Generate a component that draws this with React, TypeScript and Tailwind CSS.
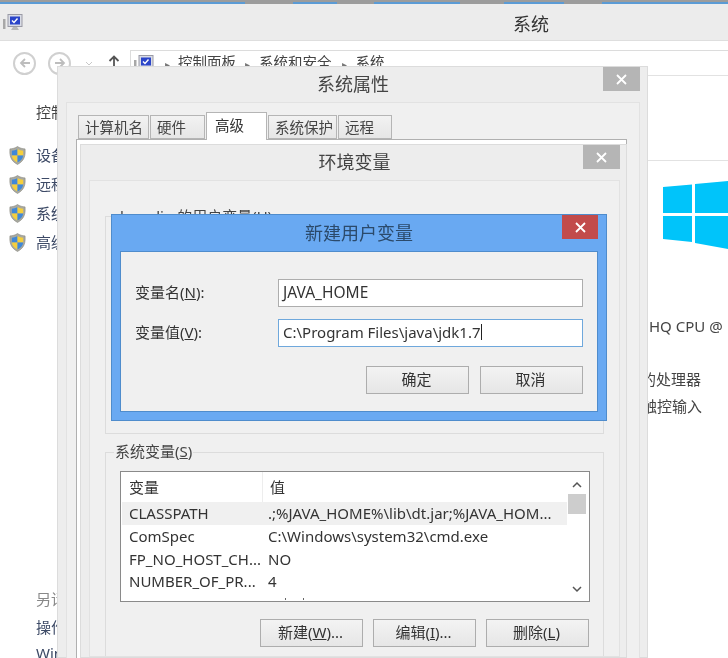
const cjk = "font-['Noto_Sans','Noto_Sans_CJK_SC',sans-serif]";

function Shield() {
  return (
    <svg width="17" height="19" viewBox="0 0 18 20" className="shrink-0">
      <path d="M9 .5C6.500 2.200 4 2.800 1 3c-.5 7 .5 12.500 8 16.500C16.500 15.500 17.500 10 17 3c-3-.2-5.500-.8-8-2.500z" fill="#a9a9a0" stroke="#85857c" strokeWidth=".6" />
      <path d="M9 3C7 4.200 5.200 4.700 3 4.900V10h6z" fill="#3f88d8" />
      <path d="M9 3c2 1.200 3.800 1.700 6 1.900V10H9z" fill="#f5cf3c" />
      <path d="M3 10c.3 3 1.800 5 6 7.500V10z" fill="#f5cf3c" />
      <path d="M15 10c-.3 3-1.800 5-6 7.500V10z" fill="#3f88d8" />
    </svg>
  );
}

function Computer({ className }: { className?: string }) {
  return (
    <svg width="20" height="17" viewBox="0 0 20 17" className={className}>
      <rect x="0" y="5" width="2.500" height="10" fill="#a8a8a8" />
      <rect x="5" y="0.500" width="14" height="12" fill="#d9dce6" stroke="#9a9aa5" />
      <rect x="7" y="2.500" width="10" height="8" fill="#2b45c9" />
      <path d="M9 6.500l2 2 3.500-4" fill="none" stroke="#fff" strokeWidth="1.400" />
      <path d="M8 16l2-3h4l2 3z" fill="#b8b8b8" />
    </svg>
  );
}

function CloseX({ color }: { color: string }) {
  return (
    <svg width="11" height="11" viewBox="0 0 11 11">
      <path d="M1 1l9 9M10 1l-9 9" stroke={color} strokeWidth="1.800" />
    </svg>
  );
}

function Btn({ children }: { children: React.ReactNode }) {
  return (
    <div className="flex h-[28px] w-[103px] items-center justify-center border border-[#adadad] bg-gradient-to-b from-[#f3f3f3] to-[#e6e6e6] pb-[2px] pr-[2px] text-[15px] leading-[20px] text-[#333]">
      {children}
    </div>
  );
}

function SideRow({ label }: { label: string }) {
  return (
    <div className="flex h-[29px] items-center gap-[10px] whitespace-nowrap pl-[9px] text-[15px] leading-[20px] text-[#3d4a66]">
      <Shield />
      <span className="-mt-[2px]">{label}</span>
    </div>
  );
}

function Tab({ label, w, active }: { label: string; w: string; active?: boolean }) {
  return active ? (
    <div className={`-mb-px flex h-[28px] items-start border border-b-0 border-[#b5b5b5] bg-white pl-[8px] pt-[2px] text-[14.500px] leading-[20px] text-[#333] ${w}`}>{label}</div>
  ) : (
    <div className={`flex h-[24px] items-center border border-[#b5b5b5] bg-gradient-to-b from-[#f2f2f2] to-[#e6e6e6] pl-[6px] text-[14.500px] leading-[20px] text-[#444] ${w}`}>{label}</div>
  );
}

const rows = [
  ["CLASSPATH", ".;%JAVA_HOME%\\lib\\dt.jar;%JAVA_HOM..."],
  ["ComSpec", "C:\\Windows\\system32\\cmd.exe"],
  ["FP_NO_HOST_CH...", "NO"],
  ["NUMBER_OF_PR...", "4"],
];

function NewVarDialog() {
  return (
    <div className="absolute left-[30px] top-[69px] z-10 flex h-[207px] w-[496px] flex-col border border-[#4f8ccc] bg-[#69a9f2] px-[8px] pb-[8px]">
      <div className="relative flex h-[36px] shrink-0 items-center justify-center pb-[1px] text-[18px] leading-[24px] text-[#2b4a6b]">
        新建用户变量
        <div className="absolute right-0 top-0 flex h-[24px] w-[36px] items-center justify-center bg-[#c24b4b]">
          <CloseX color="#ffffff" />
        </div>
      </div>
      <div className="flex-1 border border-[#4f8ccc] bg-[#f0f0f0] px-[14px] pt-[27px]">
        <div className="flex h-[28px] items-center text-[15px] leading-[20px] text-[#333]">
          <span className="-mt-[3px] w-[143px] shrink-0">
            变量名(<span className="underline">N</span>):
          </span>
          <div className="flex h-[28px] w-[305px] items-center border border-[#adadad] bg-white pb-[2px] pl-[4px] text-[15.500px] text-[#333]">JAVA_HOME</div>
        </div>
        <div className="mt-[12px] flex h-[28px] items-center text-[15px] leading-[20px] text-[#333]">
          <span className="-mt-[3px] w-[143px] shrink-0">
            变量值(<span className="underline">V</span>):
          </span>
          <div className="flex h-[28px] w-[305px] items-center border border-[#6fa8dc] bg-white pb-[2px] pl-[4px] text-[15px] text-[#333]">
            C:\Program Files\java\jdk1.7
            <span className="h-[16px] w-px bg-[#222]" />
          </div>
        </div>
        <div className="mt-[19px] flex justify-end gap-[11px]">
          <Btn>确定</Btn>
          <Btn>取消</Btn>
        </div>
      </div>
    </div>
  );
}

function EnvWindow() {
  return (
    <div className="absolute left-[22px] top-[77px] flex h-[514px] w-[547px] flex-col border border-[#dcdcdc] bg-[#ededed] pl-[8px] pr-[6px]">
      <div className="relative flex h-[35px] shrink-0 items-center justify-center pb-[2px] text-[18px] leading-[24px] text-[#444]">
        环境变量
        <div className="absolute right-0 top-0 flex h-[24px] w-[37px] items-center justify-center bg-[#b5b5b5]">
          <CloseX color="#ffffff" />
        </div>
      </div>
      <div className="flex flex-1 flex-col border border-[#e2e2e2] bg-[#f0f0f0] px-[15px]">
        <div className="mt-[35px] h-[218px] shrink-0 border border-[#dcdcdc] pl-[14px]">
          <div className="-mt-[11px] w-fit bg-[#f0f0f0] text-[15px] leading-[20px] text-[#444]">huanlin 的用户变量(U)</div>
        </div>
        <div className="relative mt-[18px] flex-1 border border-b-0 border-[#dcdcdc] px-[14px] pt-[18px]">
          <div className="absolute -top-[12px] left-[8px] bg-[#f0f0f0] px-px text-[15px] leading-[20px] text-[#444]">
            系统变量(<span className="underline">S</span>)
          </div>
          <div className="flex h-[131px] w-[470px] overflow-hidden border border-[#8a8a8a] bg-white pl-[1px] text-[15px] leading-[20px] text-[#333]">
            <div className="min-w-0 flex-1">
              <div className="grid h-[30px] grid-cols-[140px_1fr] items-center">
                <span className="pl-[7px]">变量</span>
                <span className="flex h-full items-center border-l border-[#ededed] pl-[7px]">值</span>
              </div>
              {rows.map(([k, v], i) => (
                <div key={k} className={`grid h-[22.700px] grid-cols-[139px_1fr] items-center whitespace-nowrap ${i === 0 ? "bg-[#f0f0f0]" : ""}`}>
                  <span className="pl-[7px]">{k}</span>
                  <span className="overflow-hidden pl-[7px]">{v}</span>
                </div>
              ))}
              <div className="mt-[5px] flex gap-[17px] pl-[163px]">
                <span className="h-[2px] w-px bg-[#666]" />
                <span className="h-[2px] w-px bg-[#666]" />
              </div>
            </div>
            <div className="flex w-[22px] shrink-0 flex-col items-center pr-[2px] pt-[8px]">
              <svg width="10" height="10" viewBox="0 0 10 10"><path d="M1 7l4-4 4 4" fill="none" stroke="#555" strokeWidth="1.500" /></svg>
              <div className="mt-[4px] h-[20px] w-[18px] bg-[#cdcdcd]" />
              <div className="flex-1" />
              <svg width="10" height="10" viewBox="0 0 10 10" className="mb-[7px]"><path d="M1 3l4 4 4-4" fill="none" stroke="#555" strokeWidth="1.500" /></svg>
            </div>
          </div>
          <div className="mt-[17px] flex justify-end gap-[10px]">
            <Btn>新建(<span className="underline">W</span>)...</Btn>
            <Btn>编辑(<span className="underline">I</span>)...</Btn>
            <Btn>删除(<span className="underline">L</span>)</Btn>
          </div>
        </div>
      </div>
      <NewVarDialog />
    </div>
  );
}

function SystemProps() {
  return (
    <div className="absolute left-[57px] top-[66px] flex h-[592px] w-[591px] flex-col border border-[#dcdcdc] bg-[#ededed] pl-[8px] pr-[7px]">
      <div className="relative flex h-[35px] shrink-0 items-center justify-center pb-[2px] text-[18px] leading-[24px] text-[#444]">
        系统属性
        <div className="absolute right-0 top-0 flex h-[24px] w-[37px] items-center justify-center bg-[#b5b5b5]">
          <CloseX color="#ffffff" />
        </div>
      </div>
      <div className="flex-1 border border-[#e2e2e2] bg-[#f0f0f0] pl-[9px] pr-[12px]">
        <div className="flex h-[36px] items-end gap-px pl-[2px]">
          <Tab label="计算机名" w="w-[71px]" />
          <Tab label="硬件" w="w-[55px]" />
          <Tab label="高级" w="w-[61px]" active />
          <Tab label="系统保护" w="w-[69px]" />
          <Tab label="远程" w="w-[54px]" />
        </div>
        <div className="h-[600px] border border-[#b0b0b0] bg-white" />
      </div>
      <EnvWindow />
    </div>
  );
}

export default function App() {
  return (
    <div className={`relative h-[658px] w-[728px] overflow-hidden bg-white blur-[0.4px] ${cjk}`}>
      <div className="flex h-[4px] items-stretch bg-[#9c9c9c]">
        <div className="mt-[2px] w-[245px] bg-[#5b9bd5]" />
        <div className="w-[48px]" />
        <div className="mt-[2px] w-[44px] bg-[#5b9bd5]" />
        <div className="w-[37px]" />
        <div className="mt-[2px] w-[86px] bg-[#5b9bd5]" />
        <div className="w-[44px]" />
        <div className="mt-[2px] w-[60px] bg-[#5b9bd5]" />
        <div className="w-[38px]" />
        <div className="mt-[2px] flex-1 bg-[#5b9bd5]" />
      </div>
      <div className="relative flex h-[37px] items-center border-b border-[#dedede] bg-[#ececec] pl-[3px]">
        <Computer />
        <span className="ml-[490px] pt-[3px] text-[18px] leading-[24px] text-[#333]">系统</span>
      </div>
      <div className="flex h-[34px] items-center bg-white pl-[13px]">
        <div className="mt-[10px] flex h-[23px] w-[23px] items-center justify-center rounded-full border-2 border-[#d0d0d0]">
          <svg width="12" height="10" viewBox="0 0 12 10"><path d="M6 1L2 5l4 4M2 5h9" fill="none" stroke="#bdbdbd" strokeWidth="1.800" /></svg>
        </div>
        <div className="ml-[12px] mt-[10px] flex h-[23px] w-[23px] items-center justify-center rounded-full border-2 border-[#d0d0d0]">
          <svg width="12" height="10" viewBox="0 0 12 10"><path d="M6 1l4 4-4 4M10 5H1" fill="none" stroke="#bdbdbd" strokeWidth="1.800" /></svg>
        </div>
        <svg width="8" height="5" viewBox="0 0 8 5" className="ml-[14px] mt-[10px]"><path d="M1 1l3 3 3-3" fill="none" stroke="#c8c8c8" /></svg>
        <svg width="12" height="12" viewBox="0 0 12 12" className="ml-[15px] mt-[6px]"><path d="M6 12V2M1.500 6L6 1.500 10.500 6" fill="none" stroke="#555" strokeWidth="1.800" /></svg>
        <div className="ml-[10px] flex h-[25px] flex-1 items-start self-end border-l border-t border-[#dcdcdc] pl-[3px] text-[14.500px] leading-[20px] text-[#444]">
          <Computer className="mt-[4px]" />
          <span className="ml-[11px] mt-[3px] text-[10px] text-[#777]">▸</span>
          <span className="ml-[8px] mt-[1px]">控制面板</span>
          <span className="ml-[9px] mt-[3px] text-[10px] text-[#777]">▸</span>
          <span className="ml-[9px] mt-[1px]">系统和安全</span>
          <span className="ml-[10px] mt-[3px] text-[10px] text-[#777]">▸</span>
          <span className="ml-[9px] mt-[1px]">系统</span>
        </div>
      </div>

      <div className="flex">
        <div className="flex h-[583px] w-[100px] shrink-0 flex-col whitespace-nowrap text-[15px] leading-[20px]">
          <div className="mt-[27px] pl-[36px] text-[#444]">控制面板主页</div>
          <div className="mt-[19px]">
            <SideRow label="设备管理器" />
            <SideRow label="远程设置" />
            <SideRow label="系统保护" />
            <SideRow label="高级系统设置" />
          </div>
          <div className="mt-[332px] pl-[36px] text-[#888]">另请参阅</div>
          <div className="mt-[8px] pl-[36px] text-[#3d4a66]">操作中心</div>
          <div className="mt-[6px] pl-[36px] text-[#3d4a66]">Windows 更新</div>
        </div>
        <div className="min-w-0 flex-1 overflow-hidden">
          <div className="border-t border-[#e2e2e2]" />
          <div className="mt-[84px] h-px bg-[#e2e2e2]" />
          <svg width="65" height="70" viewBox="0 0 65 70" className="ml-[563px] mt-[19px] block">
            <path d="M0 7l29-2.500V33H0zM32 4l33-3v32H32zM0 36h29v26L0 59zM32 36h33v33l-33-6z" fill="#00c4fa" />
          </svg>
          <div className="ml-[549px] mt-[66px] whitespace-nowrap text-[15px] leading-[20px] text-[#444]">HQ CPU @</div>
          <div className="mt-[33px] w-[601px] text-right text-[15px] leading-[20px] text-[#444]">基于 x64 的处理器</div>
          <div className="mt-[7px] w-[602px] text-right text-[15px] leading-[20px] text-[#444]">没有可用于此显示器的触控输入</div>
        </div>
      </div>

      <SystemProps />
    </div>
  );
}
